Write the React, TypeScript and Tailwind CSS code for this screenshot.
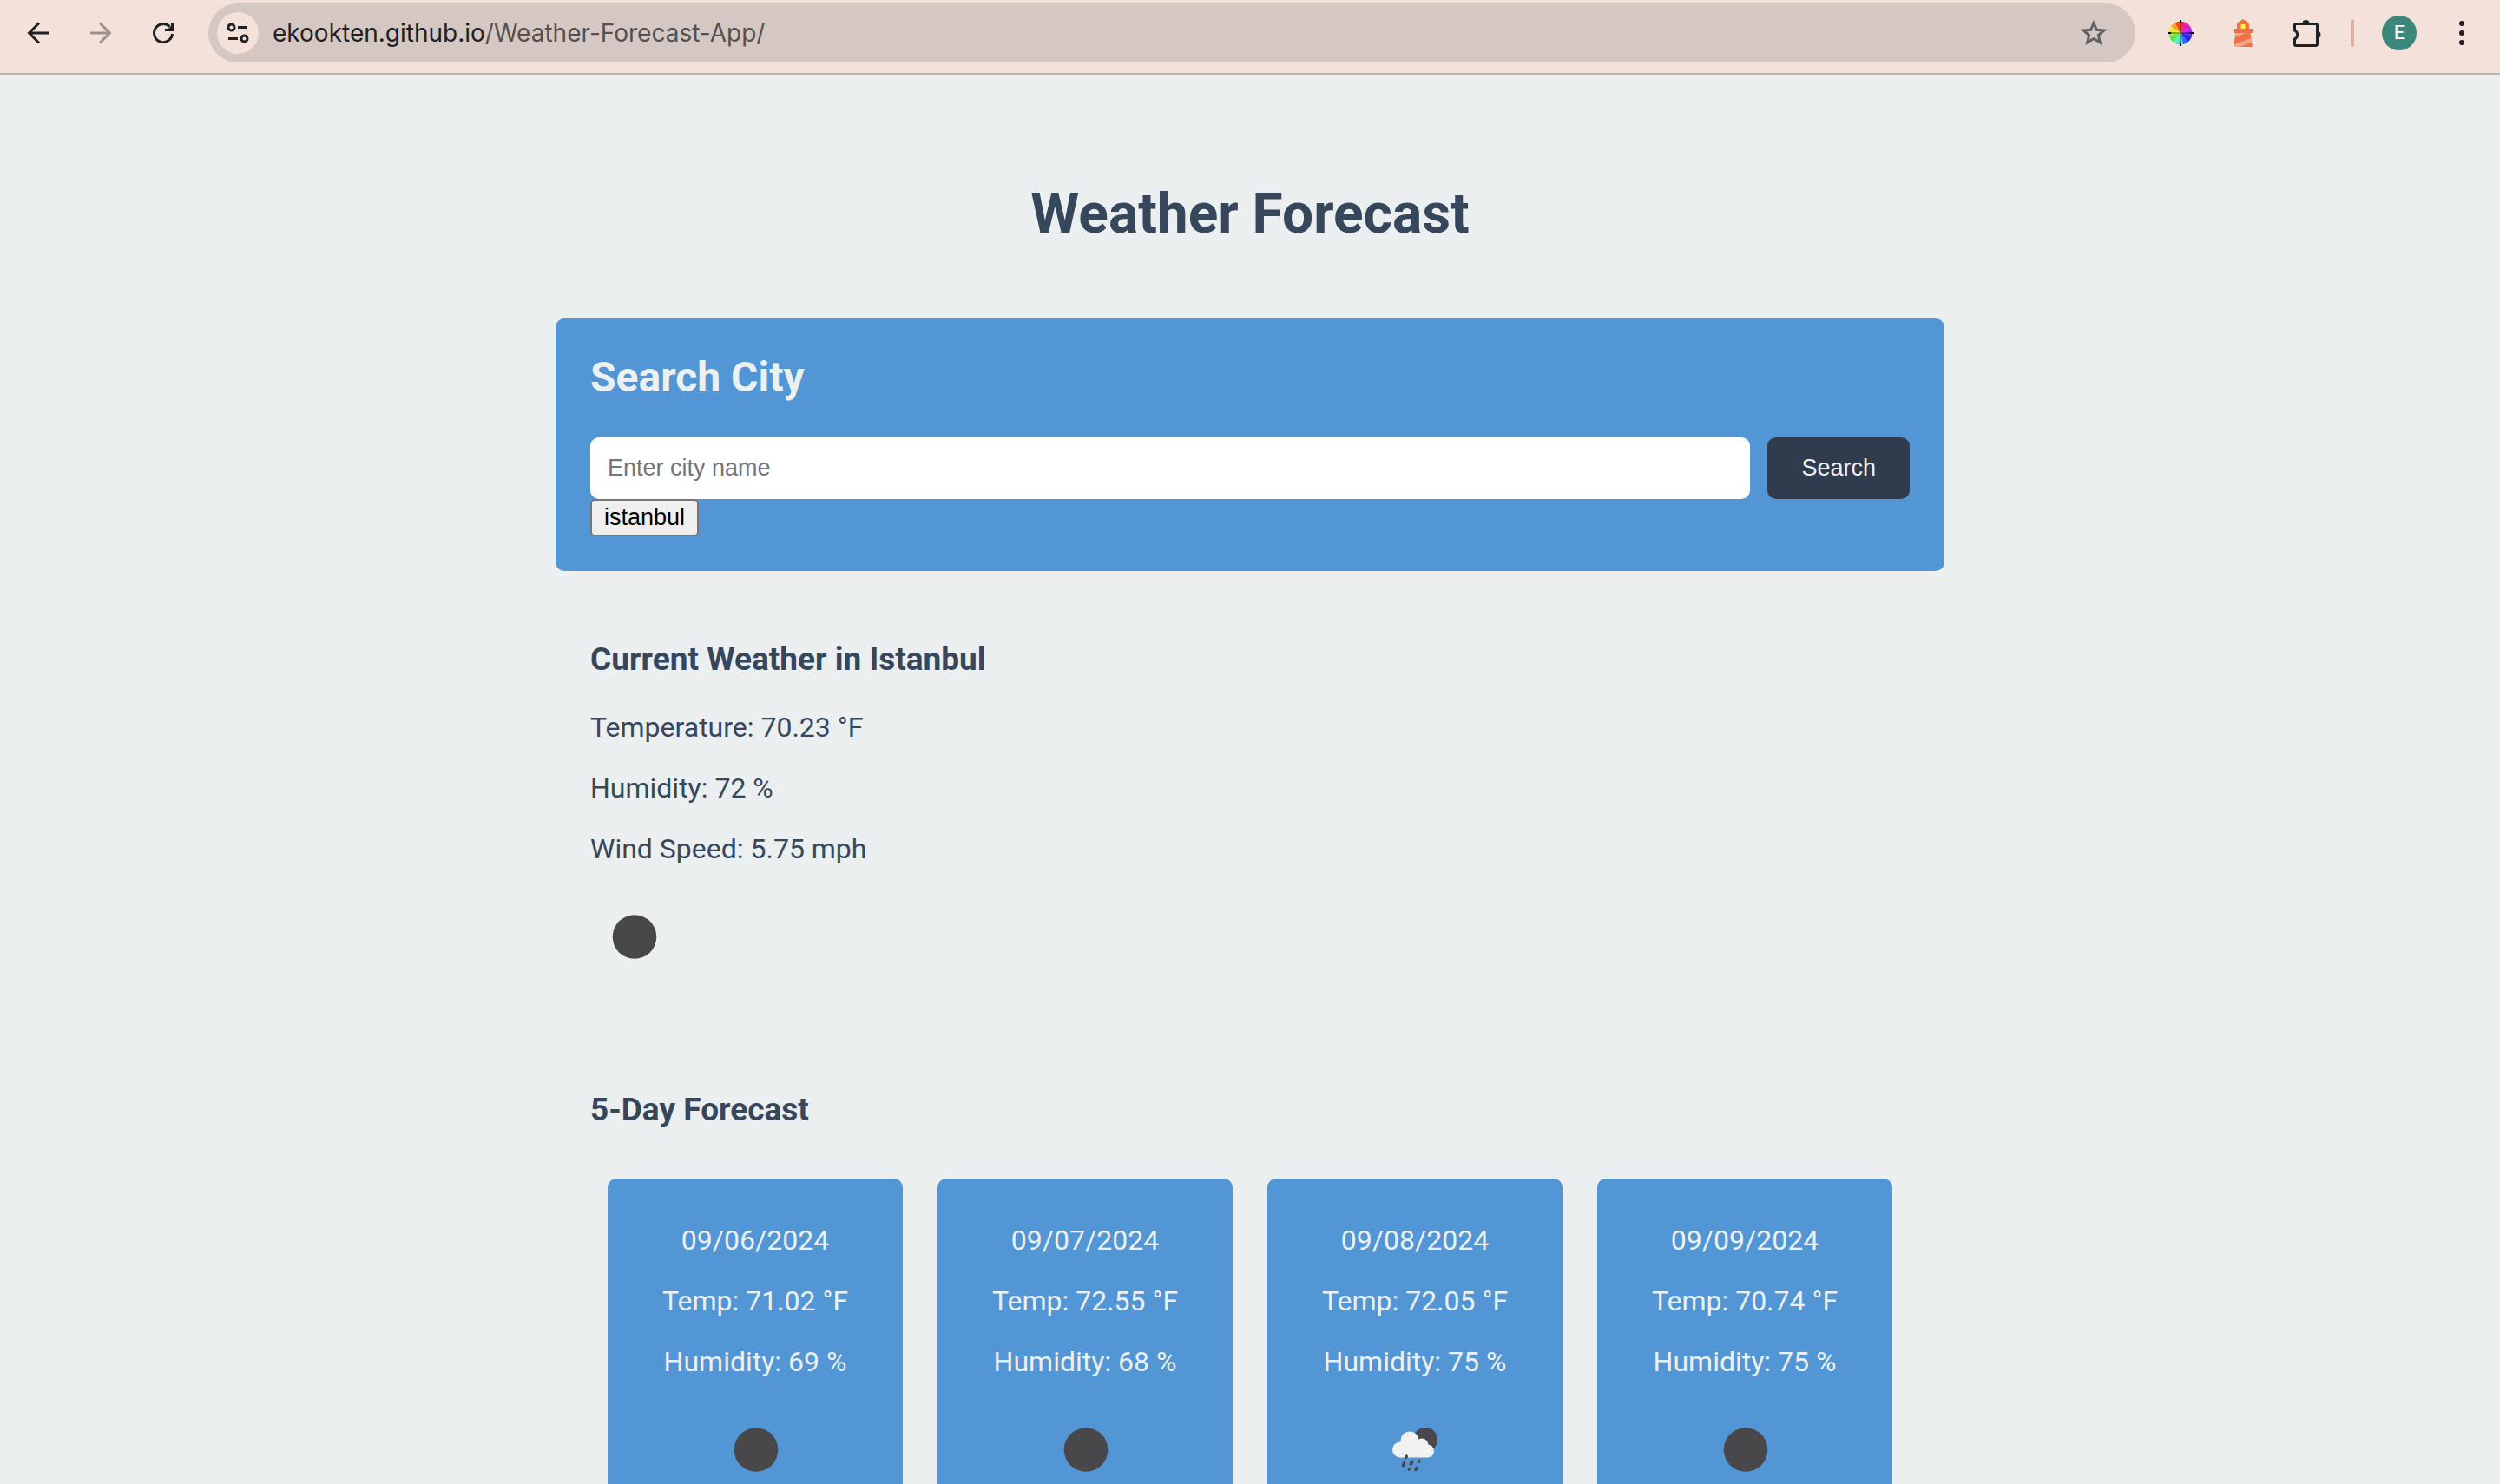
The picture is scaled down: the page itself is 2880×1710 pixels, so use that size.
import React from "react";

const ICON = "shrink-0";

function BackIcon() {
  return (
    <svg className={ICON} width="48" height="48" viewBox="0 0 48 48" fill="none" stroke="#1f2124" strokeWidth="3">
      <path d="M36 24H14M25 12.500 13.500 24 25 35.500" />
    </svg>
  );
}

function ForwardIcon() {
  return (
    <svg className={ICON} width="48" height="48" viewBox="0 0 48 48" fill="none" stroke="#9c928f" strokeWidth="3">
      <path d="M12 24h22M23 12.500 34.500 24 23 35.500" />
    </svg>
  );
}

function ReloadIcon() {
  return (
    <svg className={ICON} width="48" height="48" viewBox="0 0 48 48" fill="none" stroke="#1f2124" strokeWidth="3">
      <path d="M34.500 25A10.500 10.500 0 1 1 31.500 16.700" />
      <path d="M34.500 12v8.500H26" />
      <path d="M34 15.500V20h-4.500Z" fill="#1f2124" strokeWidth="1" />
    </svg>
  );
}

function SiteIcon() {
  return (
    <svg width="28" height="28" viewBox="0 0 28 28" fill="none" stroke="#1f2124" strokeWidth="3">
      <circle cx="6.500" cy="7.500" r="3.500" />
      <path d="M14 7.500h11M3 20.500h11" />
      <circle cx="21.500" cy="20.500" r="3.500" />
    </svg>
  );
}

function StarIcon() {
  return (
    <svg width="36" height="36" viewBox="0 0 36 36" fill="none" stroke="#5f6163" strokeWidth="3">
      <path d="M18 6.500 21.300 14.300 29.800 15 23.400 20.600 25.300 28.900 18 24.500 10.700 28.900 12.600 20.600 6.200 15 14.700 14.300Z" />
    </svg>
  );
}

const WHEEL = [
  "#f0246b", "#e01fb0", "#c028f0", "#6a2cf0", "#1f22f0", "#2f6af5",
  "#5bc8f0", "#5df0b0", "#52e84a", "#9cf02e", "#eef03a", "#f5a52a", "#f04a1c",
];

function WheelIcon() {
  const step = (2 * Math.PI) / WHEEL.length;
  const pt = (a: number) => `${(16 + 13.5 * Math.sin(a)).toFixed(2)} ${(16 - 13.5 * Math.cos(a)).toFixed(2)}`;
  return (
    <svg width="32" height="32" viewBox="0 0 32 32">
      {WHEEL.map((c, i) => (
        <path key={c} fill={c} d={`M16 16L${pt(i * step)}A13.5 13.5 0 0 1 ${pt((i + 1) * step + 0.03)}Z`} />
      ))}
      <path d="M16 1v30M1 16h30" stroke="#000" strokeWidth="1" opacity="0.6" />
      <path d="M16 1v4M16 27v4M1 16h4M27 16h4" stroke="#000" strokeWidth="2" />
    </svg>
  );
}

function LighthouseIcon() {
  return (
    <svg width="32" height="32" viewBox="0 0 32 32">
      <path fill="#ee7244" d="M16 0 23 4.500V11h4v5h-2.500L27 32H5l2.500-16H5v-5h4V4.500Z" />
      <path fill="#fbf14c" d="M13.500 6h5v5h-5z" />
      <path fill="#f4a68a" d="M7.500 16h12L6.800 21ZM5.300 29.500 25.200 22l.8 4.500L12 32H5Z" />
    </svg>
  );
}

function PuzzleIcon() {
  return (
    <svg width="36" height="36" viewBox="0 0 36 36">
      <path
        d="M6 7.500h22a1.500 1.500 0 0 1 1.500 1.500v22a1.500 1.500 0 0 1-1.500 1.500H5a1.500 1.500 0 0 1-1.500-1.500v-6a5.500 5.500 0 0 0 0-10V9A1.500 1.500 0 0 1 5 7.500Z"
        fill="none"
        stroke="#1f2124"
        strokeWidth="3"
      />
      <path fill="#1f2124" d="M12.500 7a4 4 0 0 1 8 0ZM29.500 16a4 4 0 0 1 0 8Z" />
    </svg>
  );
}

function DotsIcon() {
  return (
    <svg width="32" height="32" viewBox="0 0 32 32" fill="#1f2124">
      <circle cx="16" cy="5" r="3" />
      <circle cx="16" cy="16" r="3" />
      <circle cx="16" cy="27" r="3" />
    </svg>
  );
}

function ClearNight() {
  return (
    <svg width="100" height="100" viewBox="0 0 100 100" role="img" aria-label="Clear night">
      <circle cx="51" cy="50.500" r="25.300" fill="#48484a" />
    </svg>
  );
}

function RainNight() {
  return (
    <svg width="100" height="100" viewBox="0 0 100 100" role="img" aria-label="Rain at night">
      <circle cx="62" cy="39" r="14" fill="#48484a" />
      <g fill="#f2f2f2">
        <circle cx="33" cy="50.500" r="9" />
        <circle cx="44" cy="40" r="10.500" />
        <circle cx="58" cy="45" r="7.500" />
        <circle cx="64.500" cy="52" r="7.500" />
        <path d="M33 44h27l4.500 15.500H33Z" />
      </g>
      <g stroke="#48484a" strokeWidth="3.600" strokeLinecap="round">
        <path d="M40.300 58.200l-.6 1M37.600 66l-1.200 2.500M46.500 64.500l-1.200 2.500M52 71.500l-1 2" />
        <path strokeWidth="3" d="M55.200 63.300l-.4.800M43.600 72.500l-.4.800" />
      </g>
    </svg>
  );
}

const FORECAST = [
  { date: "09/06/2024", temp: "71.02", humidity: 69, rain: false },
  { date: "09/07/2024", temp: "72.55", humidity: 68, rain: false },
  { date: "09/08/2024", temp: "72.05", humidity: 75, rain: true },
  { date: "09/09/2024", temp: "70.74", humidity: 75, rain: false },
];

function Toolbar() {
  return (
    <header className="flex h-[86px] shrink-0 items-start border-b-2 border-[#c3b3ad] bg-[#f3e1da] pt-1">
      <div className="flex h-[68px] items-center gap-6 pr-7 pl-5">
        <button aria-label="Back"><BackIcon /></button>
        <button aria-label="Forward"><ForwardIcon /></button>
        <button aria-label="Reload"><ReloadIcon /></button>
      </div>
      <div className="flex h-[68px] flex-1 items-center rounded-full bg-[#d5c8c2] pr-[30px] pl-[10px]">
        <button aria-label="Site information" className="flex size-12 items-center justify-center rounded-full bg-[#f3e1da]">
          <SiteIcon />
        </button>
        <a href="#" className="ml-4 flex-1 font-[Inter,sans-serif] text-[28px] leading-9 text-[#1f2124]">
          ekookten.github.io<span className="text-[#55504f]">/Weather-Forecast-App/</span>
        </a>
        <button aria-label="Bookmark this page"><StarIcon /></button>
      </div>
      <div className="flex h-[68px] items-center pr-7 pl-9">
        <button aria-label="Color picker"><WheelIcon /></button>
        <button aria-label="Lighthouse" className="ml-10"><LighthouseIcon /></button>
        <button aria-label="Extensions" className="ml-10"><PuzzleIcon /></button>
        <div className="ml-8 h-8 w-1 rounded-full bg-[#deb0a0]" />
        <button aria-label="Profile" className="ml-8 flex size-10 items-center justify-center rounded-full bg-[#3c877b] font-[Roboto,sans-serif] text-[22px] leading-10 text-white">
          E
        </button>
        <button aria-label="Menu" className="ml-9"><DotsIcon /></button>
      </div>
    </header>
  );
}

export default function App() {
  return (
    <div className="flex h-screen flex-col overflow-hidden bg-[#ebeff0] font-[Roboto,sans-serif] text-[32px] leading-[38px] text-[#36475c]">
      <Toolbar />
      <main className="mx-auto min-h-0 w-full max-w-[1600px] flex-1 overflow-hidden pt-[123px]">
        <h1 className="text-center text-[64px] leading-[75px] font-bold">Weather Forecast</h1>

        <section className="mt-[83px] rounded-[10px] bg-[#5296d5] p-10 text-[#ecf0f1]">
          <h2 className="text-[48px] leading-14 font-bold">Search City</h2>
          <form className="mt-[41px] flex gap-5 font-['Liberation_Sans',sans-serif] text-[27px] leading-[31px]">
            <input
              type="text"
              aria-label="City name"
              placeholder="Enter city name"
              className="min-w-0 flex-1 rounded-[10px] bg-white p-5 text-[#333] placeholder:text-[#757575]"
            />
            <button type="button" className="rounded-[10px] bg-[#303c4d] px-[39px] py-5">Search</button>
          </form>
          <button className="block rounded-[5px] border-2 border-[#767676] bg-[#efefef] px-[14px] py-1 font-['Liberation_Sans',sans-serif] text-[27px] leading-[31px] text-black">
            istanbul
          </button>
        </section>

        <section className="mt-10 p-10">
          <h3 className="text-[37px] leading-[44px] font-bold">Current Weather in Istanbul</h3>
          <div className="mt-[37px] flex flex-col gap-8">
            <p>Temperature: 70.23 °F</p>
            <p>Humidity: 72 %</p>
            <p>Wind Speed: 5.75 mph</p>
            <ClearNight />
          </div>
        </section>

        <section className="mt-12 px-10 pt-10">
          <h3 className="text-[37px] leading-[44px] font-bold">5-Day Forecast</h3>
          <div className="mt-[57px] grid grid-cols-4 gap-10 px-5">
            {FORECAST.map((day) => (
              <article key={day.date} className="flex flex-col items-center gap-8 rounded-[10px] bg-[#5296d5] px-5 py-[52px] text-[#ecf0f1]">
                <p>{day.date}</p>
                <p>Temp: {day.temp} °F</p>
                <p>Humidity: {day.humidity} %</p>
                {day.rain ? <RainNight /> : <ClearNight />}
              </article>
            ))}
          </div>
        </section>
      </main>
    </div>
  );
}
